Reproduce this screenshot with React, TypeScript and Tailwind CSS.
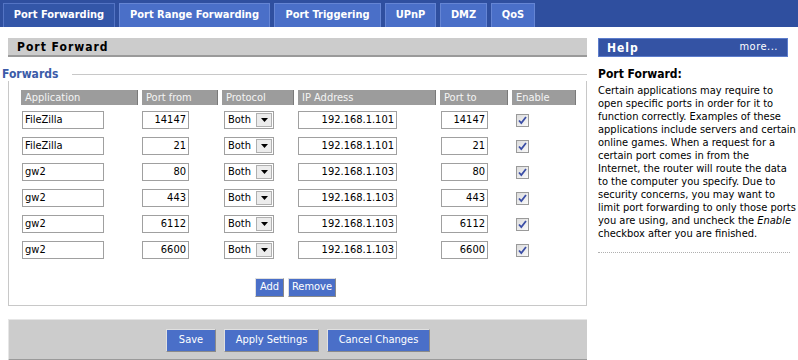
import React from "react";

const tabs = [
  { label: "Port Forwarding", w: 112, active: true },
  { label: "Port Range Forwarding", w: 151 },
  { label: "Port Triggering", w: 107 },
  { label: "UPnP", w: 51 },
  { label: "DMZ", w: 47 },
  { label: "QoS", w: 44 },
];

const rows = [
  { app: "FileZilla", from: "14147", ip: "192.168.1.101", to: "14147" },
  { app: "FileZilla", from: "21", ip: "192.168.1.101", to: "21" },
  { app: "gw2", from: "80", ip: "192.168.1.103", to: "80" },
  { app: "gw2", from: "443", ip: "192.168.1.103", to: "443" },
  { app: "gw2", from: "6112", ip: "192.168.1.103", to: "6112" },
  { app: "gw2", from: "6600", ip: "192.168.1.103", to: "6600" },
];

const headers = ["Application", "Port from", "Protocol", "IP Address", "Port to", "Enable"];

function Input({ value, w, right }: { value: string; w: number; right?: boolean }) {
  return (
    <div
      className={`h-[18px] border border-[#a0a0a0] bg-white text-[11px] leading-[16px] text-black px-[2px] whitespace-nowrap overflow-hidden ${right ? "text-right" : "text-left"}`}
      style={{ width: w }}
    >
      {value}
    </div>
  );
}

function Select() {
  return (
    <div className="ml-[2px] h-[18px] w-[50px] border border-[#a0a0a0] bg-white flex items-center justify-between pl-[3px] pr-[1px] text-[11px] text-black">
      <span>Both</span>
      <div className="w-[16px] h-[14px] bg-[#ececec] border border-[#b0b0b0] flex items-center justify-center">
        <svg width="7" height="4" viewBox="0 0 7 4"><path d="M0 0h7L3.5 4z" fill="#000" /></svg>
      </div>
    </div>
  );
}

function Check() {
  return (
    <div className="ml-[4px] mt-[3px] w-[13px] h-[13px] border border-[#9a9a9a] bg-gradient-to-br from-[#dcdcdc] to-[#fafafa] flex items-center justify-center">
      <svg width="9" height="9" viewBox="0 0 9 9"><path d="M1 4.5l2.3 2.6L8 1" stroke="#3b4ea6" strokeWidth="1.8" fill="none" /></svg>
    </div>
  );
}

function Btn({ label, w, h }: { label: string; w: number; h: number }) {
  return (
    <div
      className="bg-[#4a6fc8] text-white text-[11px] flex items-center justify-center border-t border-l border-[#e0e0e0] border-r-[#8a8a8a] border-b-[#8a8a8a] border-r border-b"
      style={{ width: w, height: h }}
    >
      {label}
    </div>
  );
}

export default function App() {
  return (
    <div className="w-[798px] h-[360px] bg-white overflow-hidden font-['DejaVu_Sans_Condensed','DejaVu_Sans',sans-serif] [font-stretch:condensed] text-black">
      {/* Top tabs bar */}
      <div className="h-[27px] bg-[#2f4f9f] flex items-end pl-[3px] gap-[4px]">
        {tabs.map((t) => (
          <div
            key={t.label}
            className={`h-[24px] flex items-center justify-center text-white font-bold text-[11px] border-t border-l border-r ${t.active ? "bg-[#3356a8] border-[#5474c4]" : "bg-[#4a6fc8] border-[#6585d4]"}`}
            style={{ width: t.w }}
          >
            {t.label}
          </div>
        ))}
      </div>

      <div className="flex pt-[11px]">
        {/* Left column */}
        <div className="w-[585px] ml-[2px]">
          <div className="ml-[6px] h-[19px] bg-[#cccccc] border-b-2 border-[#9a9a9a] flex items-center pl-[9px] text-[12px] font-bold tracking-[1px]">
            Port Forward
          </div>
          <div className="flex items-center h-[14px] mt-[10px]">
            <span className="text-[#3b5ba8] font-bold text-[12px] leading-none">Forwards</span>
            <div className="flex-1 h-px bg-[#c8c8c8] ml-[14px]" />
          </div>
          <div className="ml-[6px] border-l border-r border-b border-[#c8c8c8] h-[225px] pl-[12px] pt-[9px]">
            <div className="grid grid-cols-[121px_80px_76px_142px_72px_64px] gap-y-[8px]">
              {headers.map((h, i) => (
                <div key={h} className={`mb-[-2px] ${i < 5 ? "pr-[4px]" : ""}`}>
                  <div className="h-[15px] bg-[#9c9c9c] border-r border-[#7a7a7a] text-[#f4f4f4] text-[11px] leading-[15px] pl-[4px] whitespace-nowrap">
                    {h}
                  </div>
                </div>
              ))}
              {rows.map((r, i) => (
                <React.Fragment key={i}>
                  <div className="pl-[1px]"><Input value={r.app} w={82} /></div>
                  <div><Input value={r.from} w={47} right /></div>
                  <div><Select /></div>
                  <div><Input value={r.ip} w={99} right /></div>
                  <div className="pl-[1px]"><Input value={r.to} w={47} right /></div>
                  <div><Check /></div>
                </React.Fragment>
              ))}
            </div>
            <div className="flex justify-center gap-[4px] mt-[19px] pr-[12px] ml-[-4px]">
              <Btn label="Add" w={29} h={19} />
              <Btn label="Remove" w={48} h={19} />
            </div>
          </div>
          <div className="ml-[6px] mt-[13px] h-[42px] bg-[#cccccc] border-t border-l border-[#e6e6e6] border-b-2 border-b-[#9a9a9a] flex justify-center items-start pt-[9px] gap-[8px]">
            <Btn label="Save" w={50} h={23} />
            <Btn label="Apply Settings" w={95} h={23} />
            <Btn label="Cancel Changes" w={103} h={23} />
          </div>
        </div>

        {/* Right column */}
        <div className="ml-[11px] w-[190px]">
          <div className="h-[19px] bg-[#3453a4] border border-[#5d7dcc] flex items-center justify-between pl-[8px] pr-[9px] text-white">
            <span className="font-bold text-[12px] tracking-[1px]">Help</span>
            <span className="text-[11px] tracking-[0.5px]">more...</span>
          </div>
          <div className="mt-[10px] text-[12px] font-bold leading-[14px]">Port Forward:</div>
          <div className="mt-[3px] text-[11px] leading-[13px] whitespace-nowrap">
            Certain applications may require to<br />
            open specific ports in order for it to<br />
            function correctly. Examples of these<br />
            applications include servers and certain<br />
            online games. When a request for a<br />
            certain port comes in from the<br />
            Internet, the router will route the data<br />
            to the computer you specify. Due to<br />
            security concerns, you may want to<br />
            limit port forwarding to only those ports<br />
            you are using, and uncheck the <i>Enable</i><br />
            checkbox after you are finished.
          </div>
          <div className="mt-[12px] border-t border-dotted border-[#b0b0b0] w-[192px]" />
        </div>
      </div>
    </div>
  );
}
